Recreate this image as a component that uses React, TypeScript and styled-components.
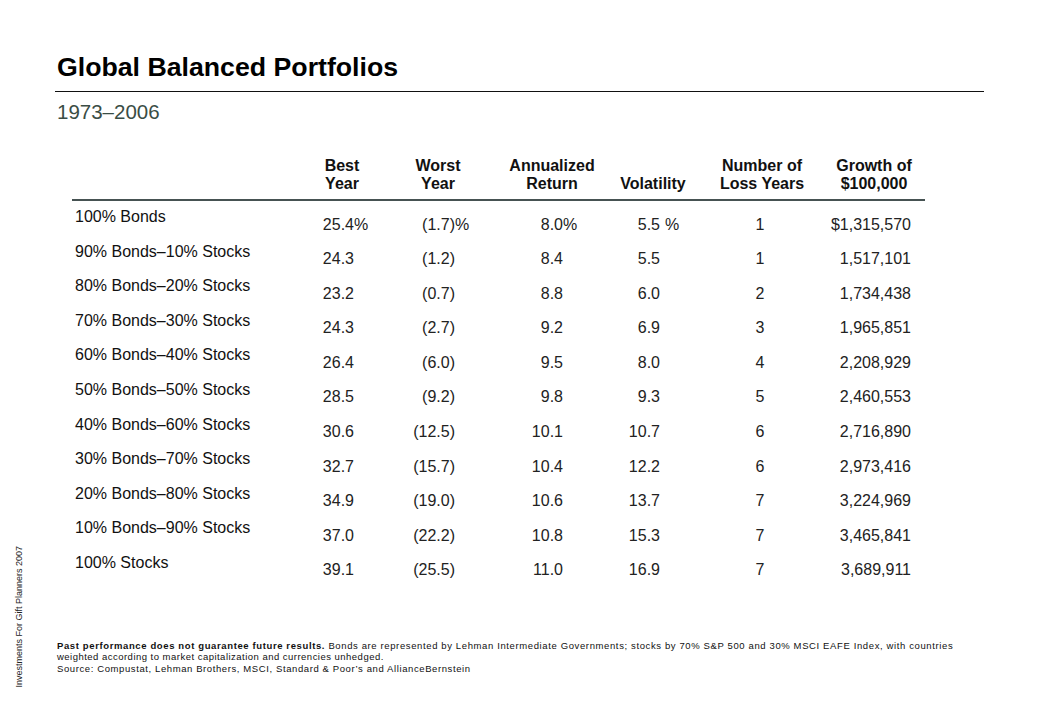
import React from "react";
import styled, { createGlobalStyle } from "styled-components";

const GlobalStyle = createGlobalStyle`
  html, body { margin: 0; padding: 0; background: #ffffff; }
  body { font-family: "Liberation Sans", Arial, sans-serif; color: #000; }
`;

const COLS = "228px 84px 108px 120px 82px 136px 88px";

const Page = styled.div`
  width: 1039px;
  height: 720px;
  display: flex;
  background: #fff;
  overflow: hidden;
`;

const Side = styled.aside`
  width: 57px;
  flex: none;
  box-sizing: border-box;
  display: flex;
  align-items: flex-end;
  padding: 0 0 32px 14px;
`;

const SideText = styled.span`
  writing-mode: vertical-rl;
  transform: rotate(180deg);
  font-size: 9px;
  line-height: 10px;
  color: #222;
  white-space: nowrap;
`;

const Main = styled.main`
  flex: none;
  width: 927px;
  padding-top: 51px;
  display: flex;
  flex-direction: column;
`;

const Title = styled.h1`
  margin: 0;
  font-size: 26.7px;
  line-height: 32px;
  font-weight: 700;
  color: #000;
`;

const Rule = styled.div`
  margin: 8px 0 0 -2px;
  height: 1px;
  background: #111;
`;

const Subtitle = styled.h2`
  margin: 8px 0 0;
  font-size: 20.5px;
  line-height: 24px;
  font-weight: 400;
  color: #3a4d45;
`;

const Table = styled.div`
  margin: 33px 0 0 15px;
  width: 853px;
`;

const HeaderRow = styled.div`
  display: grid;
  grid-template-columns: ${COLS};
  height: 35px;
`;

const HeadCell = styled.div`
  align-self: end;
  font-size: 16px;
  line-height: 17.5px;
  font-weight: 700;
  text-align: center;
  color: #111;
  white-space: nowrap;
`;

const HeadRule = styled.div`
  margin-top: 7px;
  height: 2px;
  background: #465252;
`;

const Body = styled.div`
  padding-top: 6px;
`;

const Row = styled.div`
  display: grid;
  grid-template-columns: ${COLS};
  height: 34.6px;
  align-items: start;
`;

const Label = styled.div`
  padding-left: 3px;
  font-size: 16px;
  line-height: 20px;
  color: #111;
  white-space: nowrap;
`;

const Value = styled.div<{ $pr: number; $align: "right" | "center" }>`
  padding-top: 7.5px;
  padding-right: ${(p) => p.$pr}px;
  font-size: 16px;
  line-height: 20px;
  color: #222;
  text-align: ${(p) => p.$align};
  white-space: nowrap;
`;

const Suffix = styled.span<{ $gap: number }>`
  display: inline-block;
  width: 14px;
  padding-left: ${(p) => p.$gap}px;
  text-align: left;
`;

const Footnote = styled.div`
  margin-top: 52px;
  display: flex;
  flex-direction: column;
  font-size: 9.5px;
  line-height: 11.5px;
  color: #111;
`;

const NoteLine = styled.p<{ $spacing: number }>`
  margin: 0;
  letter-spacing: ${(p) => p.$spacing}px;
  white-space: nowrap;
`;

const Strong = styled.b`
  font-weight: 700;
`;

type Col = { pr: number; align: "right" | "center"; pct: boolean; gap: number };

const columns: Col[] = [
  { pr: 16, align: "right", pct: true, gap: 0 },
  { pr: 23, align: "right", pct: true, gap: 0 },
  { pr: 35, align: "right", pct: true, gap: 0 },
  { pr: 15, align: "right", pct: true, gap: 5 },
  { pr: 4, align: "center", pct: false, gap: 0 },
  { pr: 7, align: "right", pct: false, gap: 0 },
];

const headers: [string, string][] = [
  ["Best", "Year"],
  ["Worst", "Year"],
  ["Annualized", "Return"],
  ["", "Volatility"],
  ["Number of", "Loss Years"],
  ["Growth of", "$100,000"],
];

const rows: string[][] = [
  ["100% Bonds", "25.4", "(1.7)", "8.0", "5.5", "1", "$1,315,570"],
  ["90% Bonds–10% Stocks", "24.3", "(1.2)", "8.4", "5.5", "1", "1,517,101"],
  ["80% Bonds–20% Stocks", "23.2", "(0.7)", "8.8", "6.0", "2", "1,734,438"],
  ["70% Bonds–30% Stocks", "24.3", "(2.7)", "9.2", "6.9", "3", "1,965,851"],
  ["60% Bonds–40% Stocks", "26.4", "(6.0)", "9.5", "8.0", "4", "2,208,929"],
  ["50% Bonds–50% Stocks", "28.5", "(9.2)", "9.8", "9.3", "5", "2,460,553"],
  ["40% Bonds–60% Stocks", "30.6", "(12.5)", "10.1", "10.7", "6", "2,716,890"],
  ["30% Bonds–70% Stocks", "32.7", "(15.7)", "10.4", "12.2", "6", "2,973,416"],
  ["20% Bonds–80% Stocks", "34.9", "(19.0)", "10.6", "13.7", "7", "3,224,969"],
  ["10% Bonds–90% Stocks", "37.0", "(22.2)", "10.8", "15.3", "7", "3,465,841"],
  ["100% Stocks", "39.1", "(25.5)", "11.0", "16.9", "7", "3,689,911"],
];

export default function App() {
  return (
    <>
      <GlobalStyle />
      <Page>
        <Side>
          <SideText>Investments For Gift Planners 2007</SideText>
        </Side>
        <Main>
          <Title>Global Balanced Portfolios</Title>
          <Rule />
          <Subtitle>1973–2006</Subtitle>
          <Table>
            <HeaderRow>
              <div />
              {headers.map(([a, b], i) => (
                <HeadCell key={i}>
                  {a && (
                    <>
                      {a}
                      <br />
                    </>
                  )}
                  {b}
                </HeadCell>
              ))}
            </HeaderRow>
            <HeadRule />
            <Body>
              {rows.map((r, ri) => (
                <Row key={ri}>
                  <Label>{r[0]}</Label>
                  {columns.map((c, ci) => (
                    <Value key={ci} $pr={c.pr} $align={c.align}>
                      {r[ci + 1]}
                      {c.pct && <Suffix $gap={c.gap}>{ri === 0 ? "%" : ""}</Suffix>}
                    </Value>
                  ))}
                </Row>
              ))}
            </Body>
          </Table>
          <Footnote>
            <NoteLine $spacing={0.62}>
              <Strong>Past performance does not guarantee future results.</Strong> Bonds are
              represented by Lehman Intermediate Governments; stocks by 70% S&amp;P 500 and 30%
              MSCI EAFE Index, with countries
            </NoteLine>
            <NoteLine $spacing={0.48}>
              weighted according to market capitalization and currencies unhedged.
            </NoteLine>
            <NoteLine $spacing={0.6}>
              Source: Compustat, Lehman Brothers, MSCI, Standard &amp; Poor’s and AllianceBernstein
            </NoteLine>
          </Footnote>
        </Main>
      </Page>
    </>
  );
}
